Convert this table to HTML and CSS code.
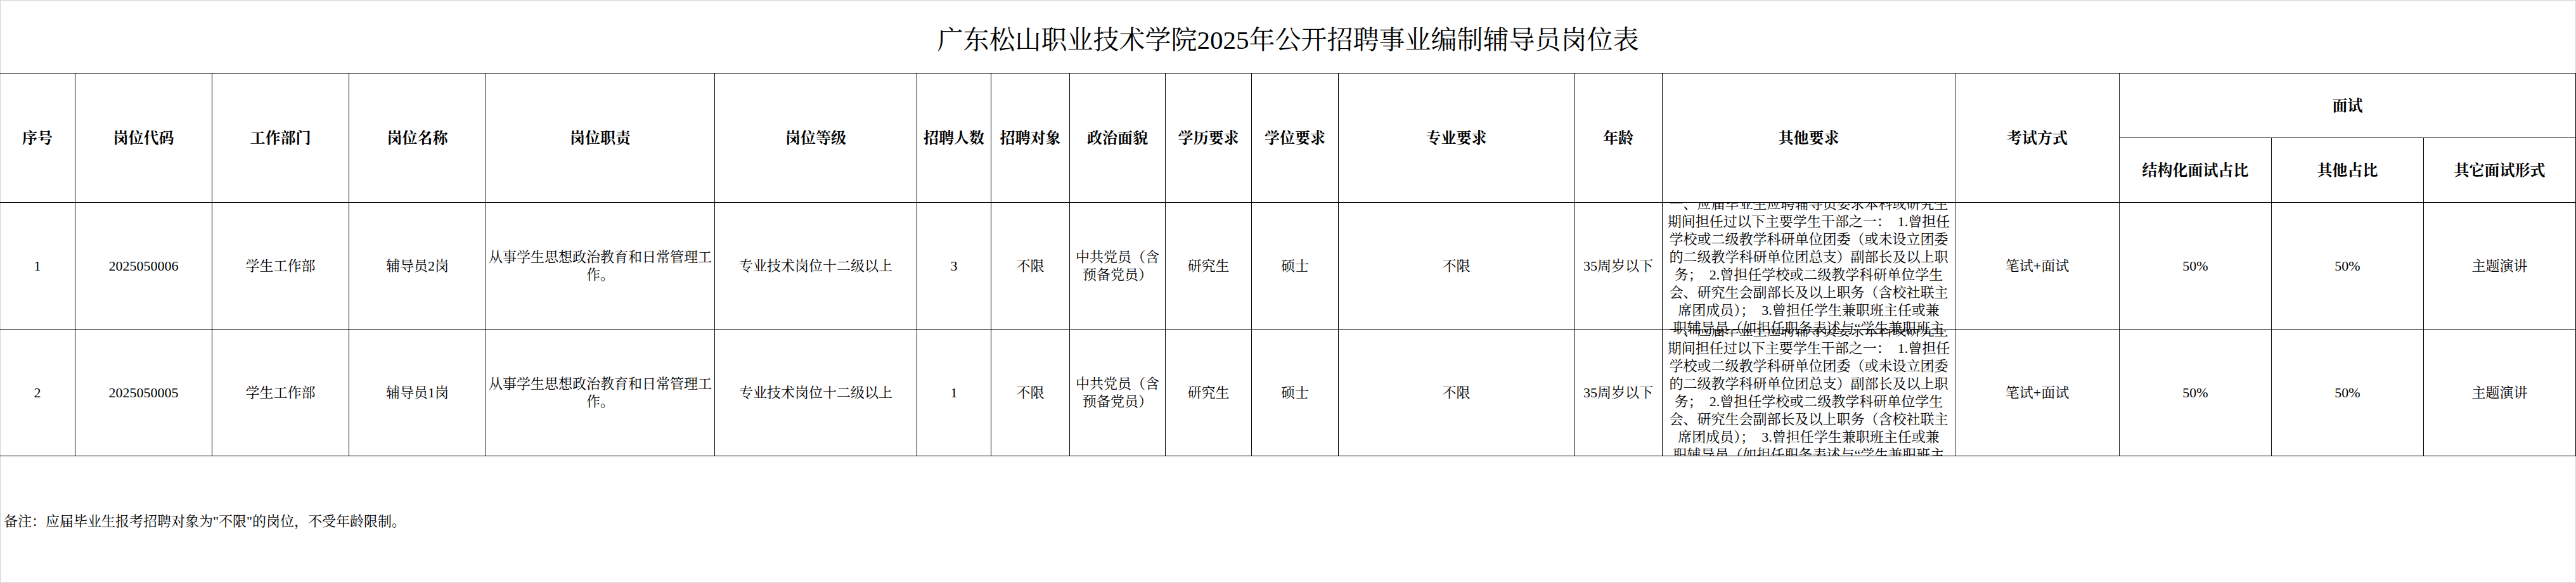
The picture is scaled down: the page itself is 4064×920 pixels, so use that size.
FILE: index.html
```html
<!DOCTYPE html>
<html lang="zh-CN">
<head>
<meta charset="utf-8">
<title>广东松山职业技术学院2025年公开招聘事业编制辅导员岗位表</title>
<link rel="stylesheet" href="styles.css">
</head>
<body>
<div class="page">
  <div class="title">广东松山职业技术学院2025年公开招聘事业编制辅导员岗位表</div>
  <div class="table-wrap">
    <table class="jobs">
      <colgroup>
        <col class="c1"><col class="c2"><col class="c3"><col class="c4"><col class="c5"><col class="c6">
        <col class="c7"><col class="c8"><col class="c9"><col class="c10"><col class="c11"><col class="c12">
        <col class="c13"><col class="c14"><col class="c15"><col class="c16"><col class="c17"><col class="c18">
      </colgroup>
      <thead>
        <tr class="hr1">
          <th rowspan="2">序号</th>
          <th rowspan="2">岗位代码</th>
          <th rowspan="2">工作部门</th>
          <th rowspan="2">岗位名称</th>
          <th rowspan="2">岗位职责</th>
          <th rowspan="2">岗位等级</th>
          <th rowspan="2">招聘人数</th>
          <th rowspan="2">招聘对象</th>
          <th rowspan="2">政治面貌</th>
          <th rowspan="2">学历要求</th>
          <th rowspan="2">学位要求</th>
          <th rowspan="2">专业要求</th>
          <th rowspan="2">年龄</th>
          <th rowspan="2">其他要求</th>
          <th rowspan="2">考试方式</th>
          <th colspan="3" class="half">面试</th>
        </tr>
        <tr class="hr2">
          <th class="half">结构化面试占比</th>
          <th class="half">其他占比</th>
          <th class="half">其它面试形式</th>
        </tr>
      </thead>
      <tbody>
        <tr>
          <td>1</td>
          <td>2025050006</td>
          <td>学生工作部</td>
          <td>辅导员2岗</td>
          <td>从事学生思想政治教育和日常管理工<br>作。</td>
          <td>专业技术岗位十二级以上</td>
          <td>3</td>
          <td>不限</td>
          <td>中共党员（含<br>预备党员）</td>
          <td>研究生</td>
          <td>硕士</td>
          <td>不限</td>
          <td>35周岁以下</td>
          <td class="other"><div class="other-box"><div class="other-text">一、应届毕业生应聘辅导员要求本科或研究生<br>期间担任过以下主要学生干部之一：&ensp;1.曾担任<br>学校或二级教学科研单位团委（或未设立团委<br>的二级教学科研单位团总支）副部长及以上职<br>务；&#12288;2.曾担任学校或二级教学科研单位学生<br>会、研究生会副部长及以上职务（含校社联主<br>席团成员）；&#12288;3.曾担任学生兼职班主任或兼<br>职辅导员（如担任职务表述与“学生兼职班主</div></div></td>
          <td>笔试+面试</td>
          <td>50%</td>
          <td>50%</td>
          <td>主题演讲</td>
        </tr>
        <tr>
          <td>2</td>
          <td>2025050005</td>
          <td>学生工作部</td>
          <td>辅导员1岗</td>
          <td>从事学生思想政治教育和日常管理工<br>作。</td>
          <td>专业技术岗位十二级以上</td>
          <td>1</td>
          <td>不限</td>
          <td>中共党员（含<br>预备党员）</td>
          <td>研究生</td>
          <td>硕士</td>
          <td>不限</td>
          <td>35周岁以下</td>
          <td class="other"><div class="other-box"><div class="other-text">一、应届毕业生应聘辅导员要求本科或研究生<br>期间担任过以下主要学生干部之一：&ensp;1.曾担任<br>学校或二级教学科研单位团委（或未设立团委<br>的二级教学科研单位团总支）副部长及以上职<br>务；&#12288;2.曾担任学校或二级教学科研单位学生<br>会、研究生会副部长及以上职务（含校社联主<br>席团成员）；&#12288;3.曾担任学生兼职班主任或兼<br>职辅导员（如担任职务表述与“学生兼职班主</div></div></td>
          <td>笔试+面试</td>
          <td>50%</td>
          <td>50%</td>
          <td>主题演讲</td>
        </tr>
      </tbody>
    </table>
  </div>
  <div class="note">备注：应届毕业生报考招聘对象为"不限"的岗位，不受年龄限制。</div>
</div>
</body>
</html>
```

FILE: styles.css
```css
html, body {
  margin: 0;
  padding: 0;
  background: #fff;
}

body {
  font-family: "Liberation Serif", "Noto Serif CJK SC", "Noto Sans CJK SC", serif;
  color: #000;
}

.page {
  width: 4064px;
  height: 920px;
  box-shadow: inset 0 0 0 1px #d4d4d4;
  overflow: hidden;
}

.title {
  box-sizing: border-box;
  height: 115px;
  padding-top: 3px;
  display: flex;
  align-items: center;
  justify-content: center;
  font-size: 41px;
  white-space: nowrap;
}

.table-wrap {
  overflow: hidden;
}

.jobs {
  width: 4064px;
  table-layout: fixed;
  border-collapse: separate;
  border-spacing: 0;
  border-top: 1px solid #000;
}

.jobs th,
.jobs td {
  box-sizing: content-box;
  padding: 0;
  border-right: 1px solid #000;
  border-bottom: 1px solid #000;
  text-align: center;
  vertical-align: middle;
}

.jobs th {
  font-size: 24px;
  font-weight: 700;
  line-height: 30px;
}

.jobs th.half {
  height: 101px;
}

.jobs td {
  height: 199px;
  font-size: 22px;
  line-height: 28px;
}

.c1 { width: 119px; }
.c2 { width: 216px; }
.c3 { width: 216px; }
.c4 { width: 216px; }
.c5 { width: 361px; }
.c6 { width: 319px; }
.c7 { width: 117px; }
.c8 { width: 124px; }
.c9 { width: 151px; }
.c10 { width: 136px; }
.c11 { width: 137px; }
.c12 { width: 372px; }
.c13 { width: 139px; }
.c14 { width: 462px; }
.c15 { width: 259px; }
.c16 { width: 240px; }
.c17 { width: 240px; }
.c18 { width: 240px; }

.other-box {
  height: 199px;
  display: flex;
  align-items: center;
  justify-content: center;
  clip-path: inset(0 -10px -40px -10px);
  white-space: nowrap;
}

.other-text {
  line-height: 28px;
}

.note {
  box-sizing: border-box;
  height: 199px;
  padding: 2px 0 0 6px;
  display: flex;
  align-items: center;
  font-size: 22px;
  white-space: nowrap;
}
```
